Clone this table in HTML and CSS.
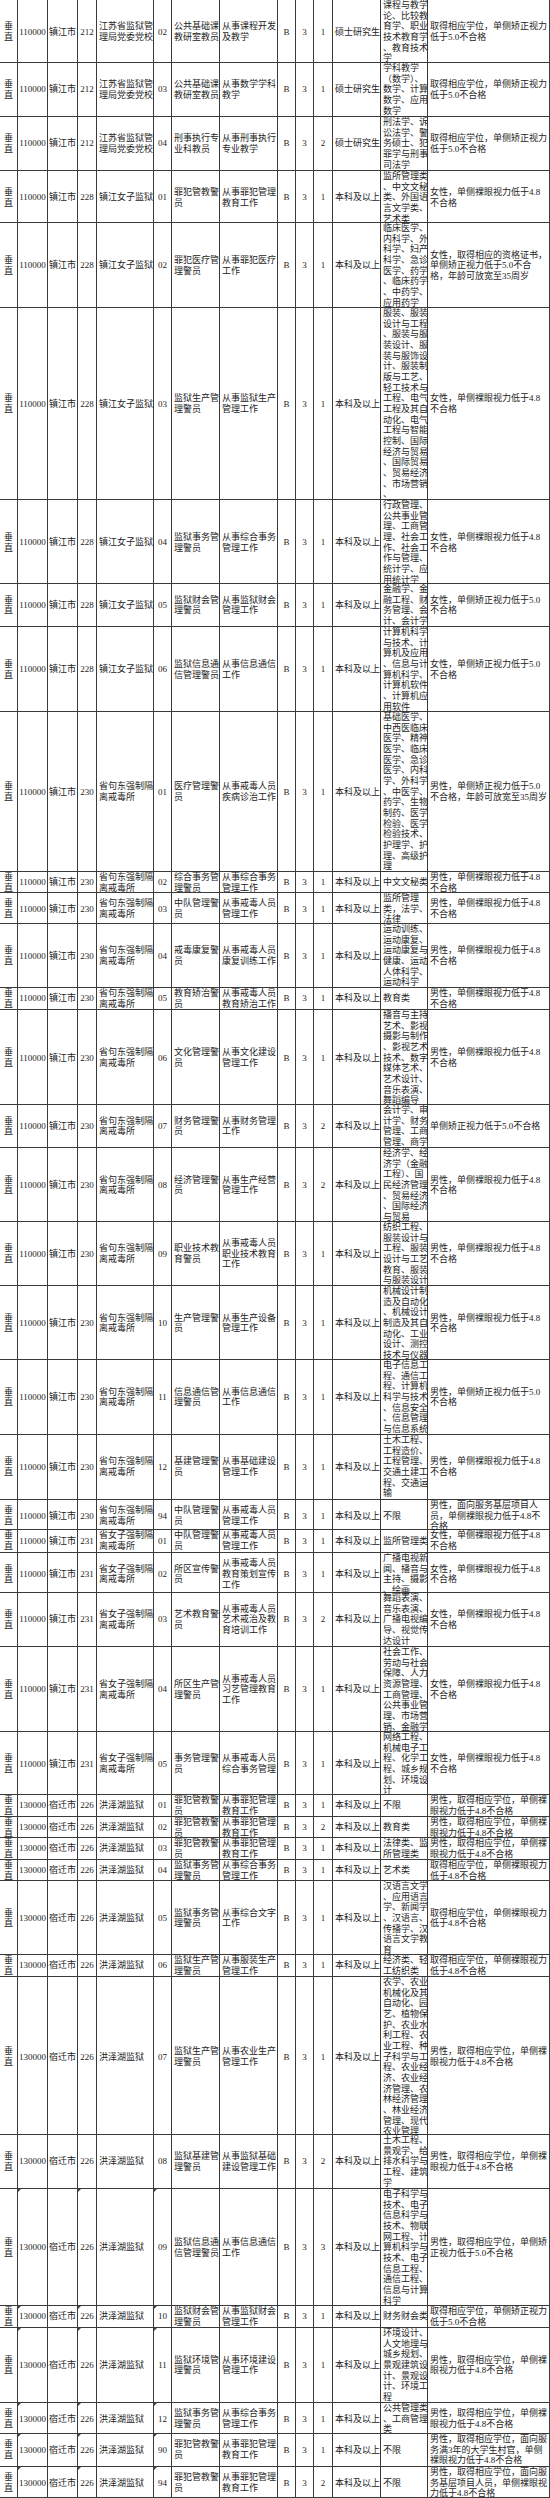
FILE: index.html
```html
<!DOCTYPE html>
<html lang="zh-CN">
<head>
<meta charset="utf-8">
<title>职位表</title>
<link rel="stylesheet" href="styles.css">
</head>
<body>
<div class="sheet">

<div class="row h63"><div class="c m">垂<br>直</div><div class="c m">110000</div><div class="c m">镇江市</div><div class="c m">212</div><div class="c">江苏省监狱管<br>理局党委党校</div><div class="c m">02</div><div class="c">公共基础课<br>教研室教员</div><div class="c">从事课程开发<br>及教学</div><div class="c m">B</div><div class="c m">3</div><div class="c m">1</div><div class="c">硕士研究生</div><div class="c">课程与教学<br>论、比较教<br>育学、职业<br>技术教育学<br>、教育技术<br>学</div><div class="c">取得相应学位，单侧矫正视力<br>低于5.0不合格</div></div>

<div class="row h54"><div class="c m">垂<br>直</div><div class="c m">110000</div><div class="c m">镇江市</div><div class="c m">212</div><div class="c">江苏省监狱管<br>理局党委党校</div><div class="c m">03</div><div class="c">公共基础课<br>教研室教员</div><div class="c">从事数学学科<br>教学</div><div class="c m">B</div><div class="c m">3</div><div class="c m">1</div><div class="c">硕士研究生</div><div class="c">学科教学<br>（数学）、<br>数学、计算<br>数学、应用<br>数学</div><div class="c">取得相应学位，单侧矫正视力<br>低于5.0不合格</div></div>

<div class="row h54"><div class="c m">垂<br>直</div><div class="c m">110000</div><div class="c m">镇江市</div><div class="c m">212</div><div class="c">江苏省监狱管<br>理局党委党校</div><div class="c m">04</div><div class="c">刑事执行专<br>业科教员</div><div class="c">从事刑事执行<br>专业教学</div><div class="c m">B</div><div class="c m">3</div><div class="c m">2</div><div class="c">硕士研究生</div><div class="c">刑法学、诉<br>讼法学、警<br>务硕士、犯<br>罪学与刑事<br>司法学</div><div class="c">取得相应学位，单侧矫正视力<br>低于5.0不合格</div></div>

<div class="row h52"><div class="c m">垂<br>直</div><div class="c m">110000</div><div class="c m">镇江市</div><div class="c m">228</div><div class="c">镇江女子监狱</div><div class="c m">01</div><div class="c">罪犯管教警<br>员</div><div class="c">从事罪犯管理<br>教育工作</div><div class="c m">B</div><div class="c m">3</div><div class="c m">1</div><div class="c">本科及以上</div><div class="c">监所管理类<br>、中文文秘<br>类、外国语<br>言文学类、<br>艺术类</div><div class="c">女性，单侧裸眼视力低于4.8<br>不合格</div></div>

<div class="row h85"><div class="c m">垂<br>直</div><div class="c m">110000</div><div class="c m">镇江市</div><div class="c m">228</div><div class="c">镇江女子监狱</div><div class="c m">02</div><div class="c">罪犯医疗管<br>理警员</div><div class="c">从事罪犯医疗<br>工作</div><div class="c m">B</div><div class="c m">3</div><div class="c m">1</div><div class="c">本科及以上</div><div class="c">临床医学、<br>内科学、外<br>科学、妇产<br>科学、急诊<br>医学、药学<br>、临床药学<br>、中药学、<br>应用药学</div><div class="c">女性，取得相应的资格证书，<br>单侧矫正视力低于5.0不合<br>格，年龄可放宽至35周岁</div></div>

<div class="row h192"><div class="c m">垂<br>直</div><div class="c m">110000</div><div class="c m">镇江市</div><div class="c m">228</div><div class="c">镇江女子监狱</div><div class="c m">03</div><div class="c">监狱生产管<br>理警员</div><div class="c">从事监狱生产<br>管理工作</div><div class="c m">B</div><div class="c m">3</div><div class="c m">1</div><div class="c">本科及以上</div><div class="c">服装、服装<br>设计与工程<br>、服装与服<br>装设计、服<br>装与服饰设<br>计、服装制<br>版与工艺、<br>轻工技术与<br>工程、电气<br>工程及其自<br>动化、电气<br>工程与智能<br>控制、国际<br>经济与贸易<br>、国际贸易<br>、贸易经济<br>、市场营销<br>、</div><div class="c">女性，单侧裸眼视力低于4.8<br>不合格</div></div>

<div class="row h84"><div class="c m">垂<br>直</div><div class="c m">110000</div><div class="c m">镇江市</div><div class="c m">228</div><div class="c">镇江女子监狱</div><div class="c m">04</div><div class="c">监狱事务管<br>理警员</div><div class="c">从事综合事务<br>管理工作</div><div class="c m">B</div><div class="c m">3</div><div class="c m">1</div><div class="c">本科及以上</div><div class="c">行政管理、<br>公共事业管<br>理、工商管<br>理、社会工<br>作、社会工<br>作与管理、<br>统计学、应<br>用统计学</div><div class="c">女性，单侧裸眼视力低于4.8<br>不合格</div></div>

<div class="row h43"><div class="c m">垂<br>直</div><div class="c m">110000</div><div class="c m">镇江市</div><div class="c m">228</div><div class="c">镇江女子监狱</div><div class="c m">05</div><div class="c">监狱财会管<br>理警员</div><div class="c">从事监狱财会<br>管理工作</div><div class="c m">B</div><div class="c m">3</div><div class="c m">1</div><div class="c">本科及以上</div><div class="c">金融学、金<br>融工程、财<br>务管理、会<br>计、会计学</div><div class="c">女性，单侧矫正视力低于5.0<br>不合格</div></div>

<div class="row h85"><div class="c m">垂<br>直</div><div class="c m">110000</div><div class="c m">镇江市</div><div class="c m">228</div><div class="c">镇江女子监狱</div><div class="c m">06</div><div class="c">监狱信息通<br>信管理警员</div><div class="c">从事信息通信<br>工作</div><div class="c m">B</div><div class="c m">3</div><div class="c m">1</div><div class="c">本科及以上</div><div class="c">计算机科学<br>与技术、计<br>算机及应用<br>、信息与计<br>算机科学、<br>计算机软件<br>、计算机应<br>用软件</div><div class="c">女性，单侧矫正视力低于5.0<br>不合格</div></div>

<div class="row h160"><div class="c m">垂<br>直</div><div class="c m">110000</div><div class="c m">镇江市</div><div class="c m">230</div><div class="c">省句东强制隔<br>离戒毒所</div><div class="c m">01</div><div class="c">医疗管理警<br>员</div><div class="c">从事戒毒人员<br>疾病诊治工作</div><div class="c m">B</div><div class="c m">3</div><div class="c m">1</div><div class="c">本科及以上</div><div class="c">基础医学、<br>中西医临床<br>医学、精神<br>医学、临床<br>医学、急诊<br>医学、内科<br>学、外科学<br>、中医学、<br>药学、生物<br>制药、医学<br>检验、医学<br>检验技术、<br>护理学、护<br>理、高级护<br>理</div><div class="c">男性，单侧矫正视力低于5.0<br>不合格，年龄可放宽至35周岁</div></div>

<div class="row h21"><div class="c m">垂<br>直</div><div class="c m">110000</div><div class="c m">镇江市</div><div class="c m">230</div><div class="c">省句东强制隔<br>离戒毒所</div><div class="c m">02</div><div class="c">综合事务管<br>理警员</div><div class="c">从事综合事务<br>管理工作</div><div class="c m">B</div><div class="c m">3</div><div class="c m">1</div><div class="c">本科及以上</div><div class="c">中文文秘类</div><div class="c">男性，单侧裸眼视力低于4.8<br>不合格</div></div>

<div class="row h31"><div class="c m">垂<br>直</div><div class="c m">110000</div><div class="c m">镇江市</div><div class="c m">230</div><div class="c">省句东强制隔<br>离戒毒所</div><div class="c m">03</div><div class="c">中队管理警<br>员</div><div class="c">从事戒毒人员<br>管理工作</div><div class="c m">B</div><div class="c m">3</div><div class="c m">1</div><div class="c">本科及以上</div><div class="c">监所管理<br>类，法学、<br>法律</div><div class="c">男性，单侧裸眼视力低于4.8<br>不合格</div></div>

<div class="row h64"><div class="c m">垂<br>直</div><div class="c m">110000</div><div class="c m">镇江市</div><div class="c m">230</div><div class="c">省句东强制隔<br>离戒毒所</div><div class="c m">04</div><div class="c">戒毒康复警<br>员</div><div class="c">从事戒毒人员<br>康复训练工作</div><div class="c m">B</div><div class="c m">3</div><div class="c m">1</div><div class="c">本科及以上</div><div class="c">运动训练、<br>运动康复、<br>运动康复与<br>健康、运动<br>人体科学、<br>运动科学</div><div class="c">男性，单侧裸眼视力低于4.8<br>不合格</div></div>

<div class="row h22"><div class="c m">垂<br>直</div><div class="c m">110000</div><div class="c m">镇江市</div><div class="c m">230</div><div class="c">省句东强制隔<br>离戒毒所</div><div class="c m">05</div><div class="c">教育矫治警<br>员</div><div class="c">从事戒毒人员<br>教育矫治工作</div><div class="c m">B</div><div class="c m">3</div><div class="c m">1</div><div class="c">本科及以上</div><div class="c">教育类</div><div class="c">男性，单侧裸眼视力低于4.8<br>不合格</div></div>

<div class="row h95"><div class="c m">垂<br>直</div><div class="c m">110000</div><div class="c m">镇江市</div><div class="c m">230</div><div class="c">省句东强制隔<br>离戒毒所</div><div class="c m">06</div><div class="c">文化管理警<br>员</div><div class="c">从事文化建设<br>管理工作</div><div class="c m">B</div><div class="c m">3</div><div class="c m">1</div><div class="c">本科及以上</div><div class="c">播音与主持<br>艺术、影视<br>摄影与制作<br>、影视艺术<br>技术、数字<br>媒体艺术、<br>艺术设计、<br>音乐表演、<br>舞蹈编导</div><div class="c">男性，单侧裸眼视力低于4.8<br>不合格</div></div>

<div class="row h43"><div class="c m">垂<br>直</div><div class="c m">110000</div><div class="c m">镇江市</div><div class="c m">230</div><div class="c">省句东强制隔<br>离戒毒所</div><div class="c m">07</div><div class="c">财务管理警<br>员</div><div class="c">从事财务管理<br>工作</div><div class="c m">B</div><div class="c m">3</div><div class="c m">2</div><div class="c">本科及以上</div><div class="c">会计学、审<br>计学、财务<br>管理、工商<br>管理、商学</div><div class="c">单侧矫正视力低于5.0不合格</div></div>

<div class="row h74"><div class="c m">垂<br>直</div><div class="c m">110000</div><div class="c m">镇江市</div><div class="c m">230</div><div class="c">省句东强制隔<br>离戒毒所</div><div class="c m">08</div><div class="c">经济管理警<br>员</div><div class="c">从事生产经营<br>管理工作</div><div class="c m">B</div><div class="c m">3</div><div class="c m">2</div><div class="c">本科及以上</div><div class="c">经济学、经<br>济学（金融<br>工程）、国<br>民经济管理<br>、贸易经济<br>、国际经济<br>与贸易</div><div class="c">男性，单侧裸眼视力低于4.8<br>不合格</div></div>

<div class="row h64"><div class="c m">垂<br>直</div><div class="c m">110000</div><div class="c m">镇江市</div><div class="c m">230</div><div class="c">省句东强制隔<br>离戒毒所</div><div class="c m">09</div><div class="c">职业技术教<br>育警员</div><div class="c">从事戒毒人员<br>职业技术教育<br>工作</div><div class="c m">B</div><div class="c m">3</div><div class="c m">1</div><div class="c">本科及以上</div><div class="c">纺织工程、<br>服装设计与<br>工程、服装<br>设计与工艺<br>教育、服装<br>与服装设计</div><div class="c">男性，单侧裸眼视力低于4.8<br>不合格</div></div>

<div class="row h74"><div class="c m">垂<br>直</div><div class="c m">110000</div><div class="c m">镇江市</div><div class="c m">230</div><div class="c">省句东强制隔<br>离戒毒所</div><div class="c m">10</div><div class="c">生产管理警<br>员</div><div class="c">从事生产设备<br>管理工作</div><div class="c m">B</div><div class="c m">3</div><div class="c m">1</div><div class="c">本科及以上</div><div class="c">机械设计制<br>造及自动化<br>、机械设计<br>制造及其自<br>动化、工业<br>设计、测控<br>技术与仪器</div><div class="c">男性，单侧裸眼视力低于4.8<br>不合格</div></div>

<div class="row h75"><div class="c m">垂<br>直</div><div class="c m">110000</div><div class="c m">镇江市</div><div class="c m">230</div><div class="c">省句东强制隔<br>离戒毒所</div><div class="c m">11</div><div class="c">信息通信管<br>理警员</div><div class="c">从事信息通信<br>工作</div><div class="c m">B</div><div class="c m">3</div><div class="c m">1</div><div class="c">本科及以上</div><div class="c">电子信息工<br>程、通信工<br>程、计算机<br>科学与技术<br>、信息安全<br>、信息管理<br>与信息系统</div><div class="c">男性，单侧矫正视力低于5.0<br>不合格</div></div>

<div class="row h65"><div class="c m">垂<br>直</div><div class="c m">110000</div><div class="c m">镇江市</div><div class="c m">230</div><div class="c">省句东强制隔<br>离戒毒所</div><div class="c m">12</div><div class="c">基建管理警<br>员</div><div class="c">从事基础建设<br>管理工作</div><div class="c m">B</div><div class="c m">3</div><div class="c m">1</div><div class="c">本科及以上</div><div class="c">土木工程、<br>工程造价、<br>工程管理、<br>交通土建工<br>程、交通运<br>输</div><div class="c">男性，单侧裸眼视力低于4.8<br>不合格</div></div>

<div class="row h30"><div class="c m">垂<br>直</div><div class="c m">110000</div><div class="c m">镇江市</div><div class="c m">230</div><div class="c">省句东强制隔<br>离戒毒所</div><div class="c m">94</div><div class="c">中队管理警<br>员</div><div class="c">从事戒毒人员<br>管理工作</div><div class="c m">B</div><div class="c m">3</div><div class="c m">1</div><div class="c">本科及以上</div><div class="c">不限</div><div class="c">男性，面向服务基层项目人<br>员，单侧裸眼视力低于4.8不<br>合格</div></div>

<div class="row h23"><div class="c m">垂<br>直</div><div class="c m">110000</div><div class="c m">镇江市</div><div class="c m">231</div><div class="c">省女子强制隔<br>离戒毒所</div><div class="c m">01</div><div class="c">中队管理警<br>员</div><div class="c">从事戒毒人员<br>管理工作</div><div class="c m">B</div><div class="c m">3</div><div class="c m">1</div><div class="c">本科及以上</div><div class="c">监所管理类</div><div class="c">女性，单侧裸眼视力低于4.8<br>不合格</div></div>

<div class="row h40"><div class="c m">垂<br>直</div><div class="c m">110000</div><div class="c m">镇江市</div><div class="c m">231</div><div class="c">省女子强制隔<br>离戒毒所</div><div class="c m">02</div><div class="c">所区宣传警<br>员</div><div class="c">从事戒毒人员<br>教育策划宣传<br>工作</div><div class="c m">B</div><div class="c m">3</div><div class="c m">1</div><div class="c">本科及以上</div><div class="c">广播电视新<br>闻、播音与<br>主持、摄影<br>、绘画</div><div class="c">女性，单侧裸眼视力低于4.8<br>不合格</div></div>

<div class="row h54"><div class="c m">垂<br>直</div><div class="c m">110000</div><div class="c m">镇江市</div><div class="c m">231</div><div class="c">省女子强制隔<br>离戒毒所</div><div class="c m">03</div><div class="c">艺术教育警<br>员</div><div class="c">从事戒毒人员<br>艺术戒治及教<br>育培训工作</div><div class="c m">B</div><div class="c m">3</div><div class="c m">2</div><div class="c">本科及以上</div><div class="c">舞蹈表演、<br>音乐表演、<br>广播电视编<br>导、视觉传<br>达设计</div><div class="c">女性，单侧裸眼视力低于4.8<br>不合格</div></div>

<div class="row h85"><div class="c m">垂<br>直</div><div class="c m">110000</div><div class="c m">镇江市</div><div class="c m">231</div><div class="c">省女子强制隔<br>离戒毒所</div><div class="c m">04</div><div class="c">所区生产管<br>理警员</div><div class="c">从事戒毒人员<br>习艺管理教育<br>工作</div><div class="c m">B</div><div class="c m">3</div><div class="c m">1</div><div class="c">本科及以上</div><div class="c">社会工作、<br>劳动与社会<br>保障、人力<br>资源管理、<br>工商管理、<br>公共事业管<br>理、市场营<br>销、金融学</div><div class="c">女性，单侧裸眼视力低于4.8<br>不合格</div></div>

<div class="row h63"><div class="c m">垂<br>直</div><div class="c m">110000</div><div class="c m">镇江市</div><div class="c m">231</div><div class="c">省女子强制隔<br>离戒毒所</div><div class="c m">05</div><div class="c">事务管理警<br>员</div><div class="c">从事戒毒人员<br>综合事务管理</div><div class="c m">B</div><div class="c m">3</div><div class="c m">1</div><div class="c">本科及以上</div><div class="c">网络工程、<br>机械电子工<br>程、化学工<br>程、城乡规<br>划、环境设<br>计</div><div class="c">女性，单侧裸眼视力低于4.8<br>不合格</div></div>

<div class="row h22"><div class="c m">垂<br>直</div><div class="c m">130000</div><div class="c m">宿迁市</div><div class="c m">226</div><div class="c">洪泽湖监狱</div><div class="c m">01</div><div class="c">罪犯管教警<br>员</div><div class="c">从事罪犯管理<br>教育工作</div><div class="c m">B</div><div class="c m">3</div><div class="c m">1</div><div class="c">本科及以上</div><div class="c">不限</div><div class="c">男性，取得相应学位，单侧裸<br>眼视力低于4.8不合格</div></div>

<div class="row h21"><div class="c m">垂<br>直</div><div class="c m">130000</div><div class="c m">宿迁市</div><div class="c m">226</div><div class="c">洪泽湖监狱</div><div class="c m">02</div><div class="c">罪犯管教警<br>员</div><div class="c">从事罪犯管理<br>教育工作</div><div class="c m">B</div><div class="c m">3</div><div class="c m">2</div><div class="c">本科及以上</div><div class="c">教育类</div><div class="c">男性，取得相应学位，单侧裸<br>眼视力低于4.8不合格</div></div>

<div class="row h22"><div class="c m">垂<br>直</div><div class="c m">130000</div><div class="c m">宿迁市</div><div class="c m">226</div><div class="c">洪泽湖监狱</div><div class="c m">03</div><div class="c">罪犯管教警<br>员</div><div class="c">从事罪犯管理<br>教育工作</div><div class="c m">B</div><div class="c m">3</div><div class="c m">1</div><div class="c">本科及以上</div><div class="c">法律类、监<br>所管理类</div><div class="c">男性，取得相应学位，单侧裸<br>眼视力低于4.8不合格</div></div>

<div class="row h21"><div class="c m">垂<br>直</div><div class="c m">130000</div><div class="c m">宿迁市</div><div class="c m">226</div><div class="c">洪泽湖监狱</div><div class="c m">04</div><div class="c">监狱事务管<br>理警员</div><div class="c">从事综合事务<br>管理工作</div><div class="c m">B</div><div class="c m">3</div><div class="c m">1</div><div class="c">本科及以上</div><div class="c">艺术类</div><div class="c">取得相应学位，单侧裸眼视力<br>低于4.8不合格</div></div>

<div class="row h74"><div class="c m">垂<br>直</div><div class="c m">130000</div><div class="c m">宿迁市</div><div class="c m">226</div><div class="c">洪泽湖监狱</div><div class="c m">05</div><div class="c">监狱事务管<br>理警员</div><div class="c">从事综合文字<br>工作</div><div class="c m">B</div><div class="c m">3</div><div class="c m">1</div><div class="c">本科及以上</div><div class="c">汉语言文学<br>、应用语言<br>学、新闻学<br>、汉语言、<br>传播学、汉<br>语言文学教<br>育</div><div class="c">取得相应学位，单侧裸眼视力<br>低于4.8不合格</div></div>

<div class="row h22"><div class="c m">垂<br>直</div><div class="c m">130000</div><div class="c m">宿迁市</div><div class="c m">226</div><div class="c">洪泽湖监狱</div><div class="c m">06</div><div class="c">监狱生产管<br>理警员</div><div class="c">从事服装生产<br>管理工作</div><div class="c m">B</div><div class="c m">3</div><div class="c m">1</div><div class="c">本科及以上</div><div class="c">经济类、轻<br>工纺织类</div><div class="c">取得相应学位，单侧裸眼视力<br>低于4.8不合格</div></div>

<div class="row h158"><div class="c m">垂<br>直</div><div class="c m">130000</div><div class="c m">宿迁市</div><div class="c m">226</div><div class="c">洪泽湖监狱</div><div class="c m">07</div><div class="c">监狱生产管<br>理警员</div><div class="c">从事农业生产<br>管理工作</div><div class="c m">B</div><div class="c m">3</div><div class="c m">1</div><div class="c">本科及以上</div><div class="c">农学、农业<br>机械化及其<br>自动化、园<br>艺、植物保<br>护、农业水<br>利工程、农<br>业工程、种<br>子科学与工<br>程、农业经<br>济、农业经<br>济管理、农<br>林经济管理<br>、林业经济<br>管理、现代<br>农业管理</div><div class="c">男性，取得相应学位，单侧裸<br>眼视力低于4.8不合格</div></div>

<div class="row h54"><div class="c m">垂<br>直</div><div class="c m">130000</div><div class="c m">宿迁市</div><div class="c m">226</div><div class="c">洪泽湖监狱</div><div class="c m">08</div><div class="c">监狱基建管<br>理警员</div><div class="c">从事监狱基础<br>建设管理工作</div><div class="c m">B</div><div class="c m">3</div><div class="c m">2</div><div class="c">本科及以上</div><div class="c">土木工程、<br>景观学、给<br>排水科学与<br>工程、建筑<br>学</div><div class="c">男性，取得相应学位，单侧裸<br>眼视力低于4.8不合格</div></div>

<div class="row h117"><div class="c m">垂<br>直</div><div class="c m t">130000</div><div class="c m">宿迁市</div><div class="c m t">226</div><div class="c">洪泽湖监狱</div><div class="c m t">09</div><div class="c">监狱信息通<br>信管理警员</div><div class="c">从事信息通信<br>工作</div><div class="c m">B</div><div class="c m">3</div><div class="c m">3</div><div class="c">本科及以上</div><div class="c">电子科学与<br>技术、电子<br>信息科学与<br>技术、物联<br>网工程、计<br>算机科学与<br>技术、电子<br>信息工程、<br>通信工程、<br>信息与计算<br>科学</div><div class="c">男性，取得相应学位，单侧矫<br>正视力低于5.0不合格</div></div>

<div class="row h22"><div class="c m">垂<br>直</div><div class="c m t">130000</div><div class="c m">宿迁市</div><div class="c m t">226</div><div class="c">洪泽湖监狱</div><div class="c m t">10</div><div class="c">监狱财会管<br>理警员</div><div class="c">从事监狱财会<br>管理工作</div><div class="c m">B</div><div class="c m">3</div><div class="c m">1</div><div class="c">本科及以上</div><div class="c">财务财会类</div><div class="c">取得相应学位，单侧矫正视力<br>低于5.0不合格</div></div>

<div class="row h75"><div class="c m">垂<br>直</div><div class="c m t">130000</div><div class="c m">宿迁市</div><div class="c m t">226</div><div class="c">洪泽湖监狱</div><div class="c m t">11</div><div class="c">监狱环境管<br>理警员</div><div class="c">从事环境建设<br>管理工作</div><div class="c m">B</div><div class="c m">3</div><div class="c m">1</div><div class="c">本科及以上</div><div class="c">环境设计、<br>人文地理与<br>城乡规划、<br>景观建筑设<br>计、景观设<br>计、环境工<br>程</div><div class="c">男性，取得相应学位，单侧裸<br>眼视力低于4.8不合格</div></div>

<div class="row h31"><div class="c m">垂<br>直</div><div class="c m t">130000</div><div class="c m">宿迁市</div><div class="c m t">226</div><div class="c">洪泽湖监狱</div><div class="c m t">12</div><div class="c">监狱事务管<br>理警员</div><div class="c">从事综合事务<br>管理工作</div><div class="c m">B</div><div class="c m">3</div><div class="c m">1</div><div class="c">本科及以上</div><div class="c">公共管理类<br>、工商管理<br>类</div><div class="c">男性，取得相应学位，单侧裸<br>眼视力低于4.8不合格</div></div>

<div class="row h33"><div class="c m">垂<br>直</div><div class="c m t">130000</div><div class="c m">宿迁市</div><div class="c m t">226</div><div class="c">洪泽湖监狱</div><div class="c m t">90</div><div class="c">罪犯管教警<br>员</div><div class="c">从事罪犯管理<br>教育工作</div><div class="c m">B</div><div class="c m">3</div><div class="c m">1</div><div class="c">本科及以上</div><div class="c">不限</div><div class="c">男性，取得相应学位，面向服<br>务满3年的大学生村官，单侧<br>裸眼视力低于4.8不合格</div></div>

<div class="row h31"><div class="c m">垂<br>直</div><div class="c m t">130000</div><div class="c m">宿迁市</div><div class="c m t">226</div><div class="c">洪泽湖监狱</div><div class="c m t">94</div><div class="c">罪犯管教警<br>员</div><div class="c">从事罪犯管理<br>教育工作</div><div class="c m">B</div><div class="c m">3</div><div class="c m">2</div><div class="c">本科及以上</div><div class="c">不限</div><div class="c">男性，取得相应学位，面向服<br>务基层项目人员，单侧裸眼视<br>力低于4.8不合格</div></div>

</div>
</body>
</html>
```

FILE: styles.css
```css
html, body {
  margin: 0;
  padding: 0;
  background: #ffffff;
}

.sheet {
  width: 550px;
  font-family: "Liberation Serif", "Noto Sans CJK SC", serif;
  font-size: 9px;
  line-height: 10.65px;
  color: #1c1c1c;
}

.row {
  display: grid;
  grid-template-columns: 18px 30px 30px 19px 57px 18px 48px 58px 18px 18px 19px 48px 47px 122px;
  box-sizing: border-box;
  border-bottom: 1px solid #3a3a3a;
}

.c {
  position: relative;
  display: flex;
  align-items: center;
  justify-content: flex-start;
  box-sizing: border-box;
  border-right: 1px solid #3a3a3a;
  padding: 0 0 0 2px;
  overflow: visible;
  white-space: nowrap;
}

.m {
  justify-content: center;
  text-align: center;
  padding: 0;
}

.t::before {
  content: "";
  position: absolute;
  left: 0;
  top: 0;
  width: 0;
  height: 0;
  border-top: 3px solid #444;
  border-right: 3px solid transparent;
}

.h21 { height: 21px; }
.h22 { height: 22px; }
.h23 { height: 23px; }
.h30 { height: 30px; }
.h31 { height: 31px; }
.h33 { height: 33px; }
.h40 { height: 40px; }
.h43 { height: 43px; }
.h52 { height: 52px; }
.h54 { height: 54px; }
.h63 { height: 63px; }
.h64 { height: 64px; }
.h65 { height: 65px; }
.h74 { height: 74px; }
.h75 { height: 75px; }
.h84 { height: 84px; }
.h85 { height: 85px; }
.h95 { height: 95px; }
.h117 { height: 117px; }
.h158 { height: 158px; }
.h160 { height: 160px; }
.h192 { height: 192px; }
```
